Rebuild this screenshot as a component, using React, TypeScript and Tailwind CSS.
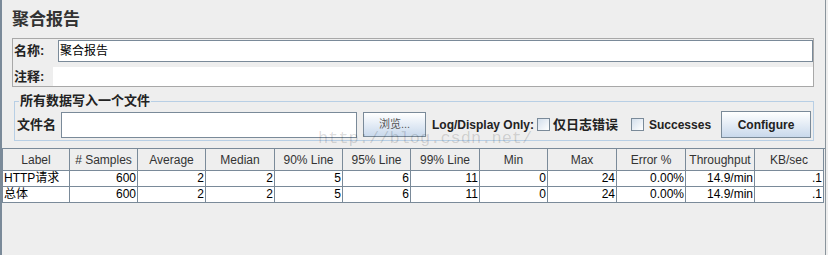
const columns = [
  { title: "Label", width: "w-[67px]" },
  { title: "# Samples", width: "w-[68px]" },
  { title: "Average", width: "w-[68px]" },
  { title: "Median", width: "w-[69px]" },
  { title: "90% Line", width: "w-[68px]" },
  { title: "95% Line", width: "w-[68px]" },
  { title: "99% Line", width: "w-[69px]" },
  { title: "Min", width: "w-[68px]" },
  { title: "Max", width: "w-[69px]" },
  { title: "Error %", width: "w-[69px]" },
  { title: "Throughput", width: "w-[69px]" },
  { title: "KB/sec", width: "w-[69px]" },
];

const rows = [
  ["HTTP请求", "600", "2", "2", "5", "6", "11", "0", "24", "0.00%", "14.9/min", ".1"],
  ["总体", "600", "2", "2", "5", "6", "11", "0", "24", "0.00%", "14.9/min", ".1"],
];

function Box() {
  return (
    <span className="h-[13px] w-[13px] shrink-0 border border-[#7a8a99] bg-linear-to-br from-[#d3dfec] to-white" />
  );
}

export default function App() {
  return (
    <div className="relative flex h-[255px] w-[828px] overflow-hidden bg-[#eeeeee] font-['Liberation_Sans','Noto_Sans_CJK_SC',sans-serif] text-[#222]">
      <div className="w-[2px] shrink-0 bg-[#7a8a99]" />

      <div className="flex w-[823px] shrink-0 flex-col">
        {/* Title */}
        <div className="h-[38px] pl-[10px] pt-[10px] text-[17px] font-semibold leading-[20px] text-[#333]">
          聚合报告
        </div>

        {/* Name / comment */}
        <div className="ml-[10px] w-[802px] border border-[#a8a8a8] pt-[1px]">
          <div className="flex h-[22px] items-center">
            <span className="w-[45px] shrink-0 whitespace-nowrap pl-[1px] text-[13px] font-bold">名称:</span>
            <div className="flex h-[22px] flex-1 items-center border border-[#7a8a99] bg-white pl-[1px] text-[12px] text-black">
              聚合报告
            </div>
          </div>
          <div className="mt-[5px] flex h-[19px] items-center">
            <span className="w-[40px] shrink-0 whitespace-nowrap pl-[1px] text-[13px] font-bold">注释:</span>
            <div className="h-[19px] flex-1 bg-white" />
          </div>
        </div>

        {/* Write all data to a file */}
        <fieldset className="ml-[12px] mt-[7px] w-[800px] border border-[#b8cfe5] pb-[2px] pl-[2px] pr-[2px]">
          <legend className="ml-[2px] px-[1px] text-[13px] font-bold leading-[14px] text-[#222]">
            所有数据写入一个文件
          </legend>
          <div className="mt-[3px] flex h-[27px] items-center whitespace-nowrap">
            <span className="w-[44px] shrink-0 text-[13px] font-bold">文件名</span>
            <div className="h-[26px] w-[296px] shrink-0 border border-[#7a8a99] bg-white" />
            <button className="ml-[6px] flex h-[25px] w-[63px] shrink-0 items-center justify-center border border-[#7a8a99] bg-linear-to-b from-white to-[#c9d9ec] text-[11px] text-[#555]">
              浏览...
            </button>
            <span className="ml-[6px] w-[105px] shrink-0 text-[12px] font-bold text-[#222]">Log/Display Only:</span>
            <Box />
            <span className="ml-[3px] w-[78px] shrink-0 text-[13px] font-bold">仅日志错误</span>
            <Box />
            <span className="ml-[5px] w-[72px] shrink-0 text-[12px] font-bold">Successes</span>
            <button className="flex h-[27px] w-[90px] shrink-0 items-center justify-center border border-[#7a8a99] bg-linear-to-b from-white to-[#c9d9ec] text-[12px] font-bold text-[#222]">
              Configure
            </button>
          </div>
        </fieldset>

        {/* Results table */}
        <div className="mt-[7px] flex w-[823px] flex-col border-l border-t border-[#7a8a99] text-[12px]">
          <div className="flex h-[22px]">
            {columns.map((c) => (
              <div
                key={c.title}
                className={`${c.width} flex items-center justify-center whitespace-nowrap border-b border-r border-[#7a8a99] bg-[#eeeeee] pt-[1px] text-[#333]`}
              >
                {c.title}
              </div>
            ))}
          </div>
          {rows.map((r, ri) => (
            <div key={ri} className="flex h-[16px]">
              {r.map((v, i) => (
                <div
                  key={i}
                  className={`${columns[i].width} flex items-center whitespace-nowrap border-b border-r border-[#7a8a99] bg-white leading-[15px] text-black ${
                    i === 0 ? "justify-start pl-[1px]" : "justify-end pr-[1px]"
                  }`}
                >
                  {v}
                </div>
              ))}
            </div>
          ))}
        </div>
      </div>

      <div className="w-[1px] shrink-0 bg-[#8a949c]" />

      {/* watermark */}
      <div className="pointer-events-none absolute left-[318px] top-[128px] font-['Liberation_Mono',monospace] text-[17px] leading-[22px] text-black/15">
        http://blog.csdn.net/
      </div>
    </div>
  );
}
